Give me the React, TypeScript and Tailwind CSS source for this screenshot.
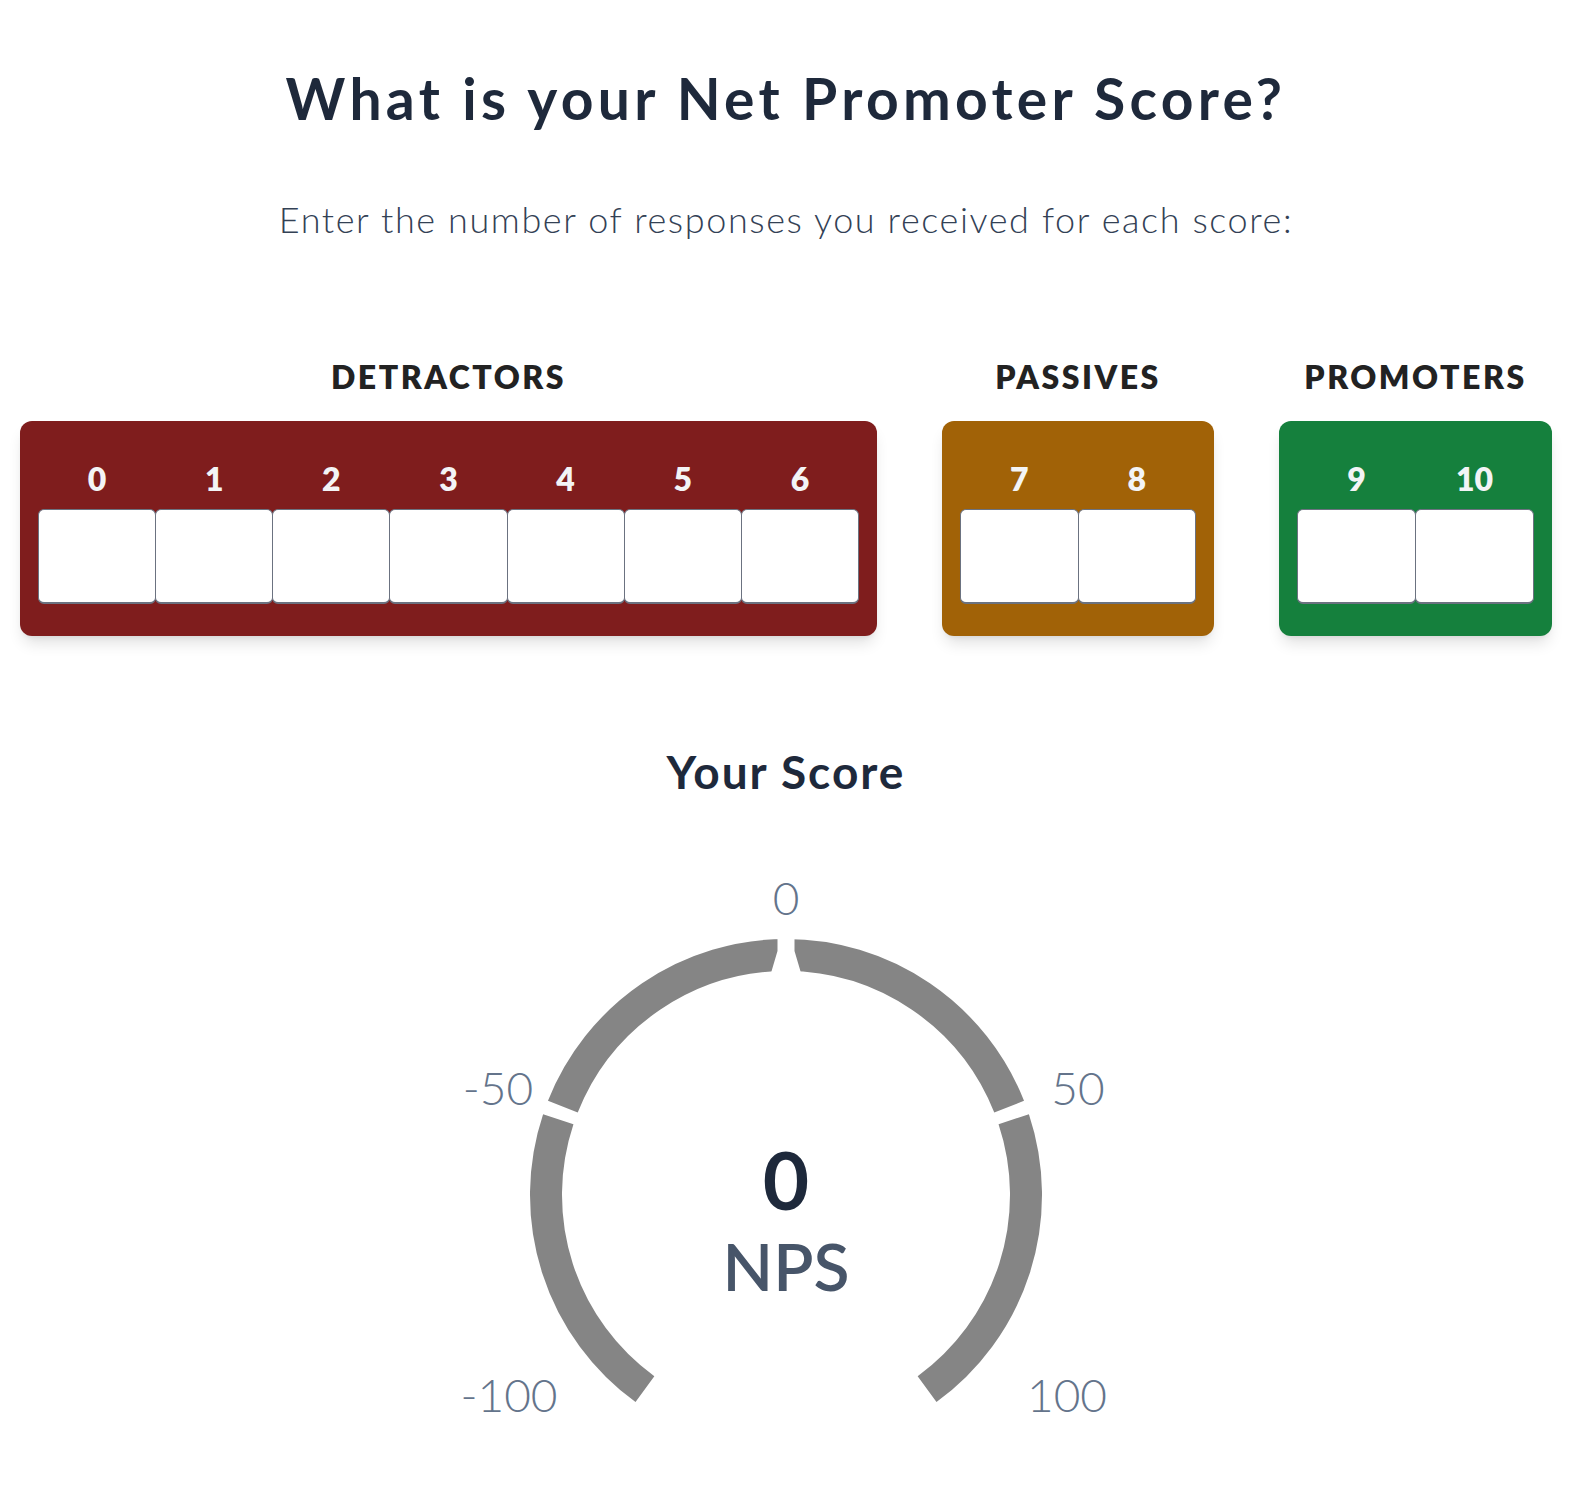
import React from "react";

const groups = [
  { title: "DETRACTORS", scores: [0, 1, 2, 3, 4, 5, 6], bg: "bg-[#7f1d1d]", width: "w-[857px]" },
  { title: "PASSIVES", scores: [7, 8], bg: "bg-[#a16207]", width: "w-[272px]" },
  { title: "PROMOTERS", scores: [9, 10], bg: "bg-[#15803d]", width: "w-[273px]" },
];

const FONT = "Lato, 'Open Sans', sans-serif";

// angle measured from straight up, clockwise, in degrees
function polar(r: number, deg: number) {
  const a = (deg * Math.PI) / 180;
  return [Math.sin(a) * r, -Math.cos(a) * r];
}

function arcPath(r: number, from: number, to: number) {
  const [x1, y1] = polar(r, from);
  const [x2, y2] = polar(r, to);
  const large = Math.abs(to - from) > 180 ? 1 : 0;
  return `M ${x1} ${y1} A ${r} ${r} 0 ${large} 1 ${x2} ${y2}`;
}

function Gauge() {
  const segments: [number, number][] = [
    [-144, -71.6],
    [-68.4, 0],
    [0, 68.4],
    [71.6, 144],
  ];
  return (
    <svg width="700" height="570" viewBox="-350 -336 700 570" className="block mx-auto" style={{ fontFamily: FONT }}>
      {segments.map(([a, b], i) => (
        <path key={i} d={arcPath(240, a, b)} fill="none" stroke="#858585" strokeWidth="32" />
      ))}
      {/* pointer at current value */}
      <polygon points="-8.5,-262 8.5,-262 8.5,-244 15,-222 -15,-222 -8.5,-244" fill="#ffffff" />

      <g fill="#64748b" fontSize="46" fontWeight="300" textAnchor="middle" dominantBaseline="central">
        <text x="0" y="-298">0</text>
        <text x="-288" y="-108">-50</text>
        <text x="292" y="-108">50</text>
        <text x="-277" y="199">-100</text>
        <text x="281" y="199">100</text>
      </g>

      <text x="0" y="-16" fill="#1e293b" fontSize="80" fontWeight="700" textAnchor="middle" dominantBaseline="central">
        0
      </text>
      <text x="0" y="70" fill="#475569" fontSize="66" fontWeight="600" textAnchor="middle" dominantBaseline="central">
        NPS
      </text>
    </svg>
  );
}

export default function App() {
  return (
    <div className="min-h-[1496px] bg-white pl-5 pr-[30px] font-[Lato,'Open_Sans',sans-serif]">
      {/* Header */}
      <h1 className="pt-[70px] text-center text-[57px] leading-none font-bold tracking-[4.3px] text-[#1e293b]">
        What is your Net Promoter Score?
      </h1>
      <p className="mt-[74px] text-center text-[36px] leading-none font-light tracking-[1.6px] text-[#334155]">
        Enter the number of responses you received for each score:
      </p>

      {/* Score inputs */}
      <div className="mt-[124px] flex justify-between">
        {groups.map((g) => (
          <div key={g.title} className={`${g.width} flex flex-col items-stretch`}>
            <h3 className="text-center text-[32px] leading-none font-extrabold tracking-[2.5px] text-[#222222]">
              {g.title}
            </h3>
            <div className={`mt-[28px] ${g.bg} rounded-xl px-[18px] pt-[38px] pb-8 shadow-[0_10px_15px_-3px_rgba(0,0,0,0.12),0_4px_6px_-4px_rgba(0,0,0,0.1)]`}>
              <div className="flex">
                {g.scores.map((s, i) => (
                  <div key={s} className={`flex-1 flex flex-col items-center ${i > 0 ? "-ml-px" : ""}`}>
                    <span className="h-10 flex items-center text-[32px] font-extrabold text-[#f3f4f6]">{s}</span>
                    <input
                      type="text"
                      className="mt-[10px] w-full h-[95px] bg-white border border-b-2 border-[#6b7280] rounded-md outline-none"
                    />
                  </div>
                ))}
              </div>
            </div>
          </div>
        ))}
      </div>

      {/* Result */}
      <h2 className="mt-[113px] text-center text-[46px] leading-none font-bold tracking-[2px] text-[#1e293b]">Your Score</h2>
      <div className="mt-[64px]">
        <Gauge />
      </div>
    </div>
  );
}
